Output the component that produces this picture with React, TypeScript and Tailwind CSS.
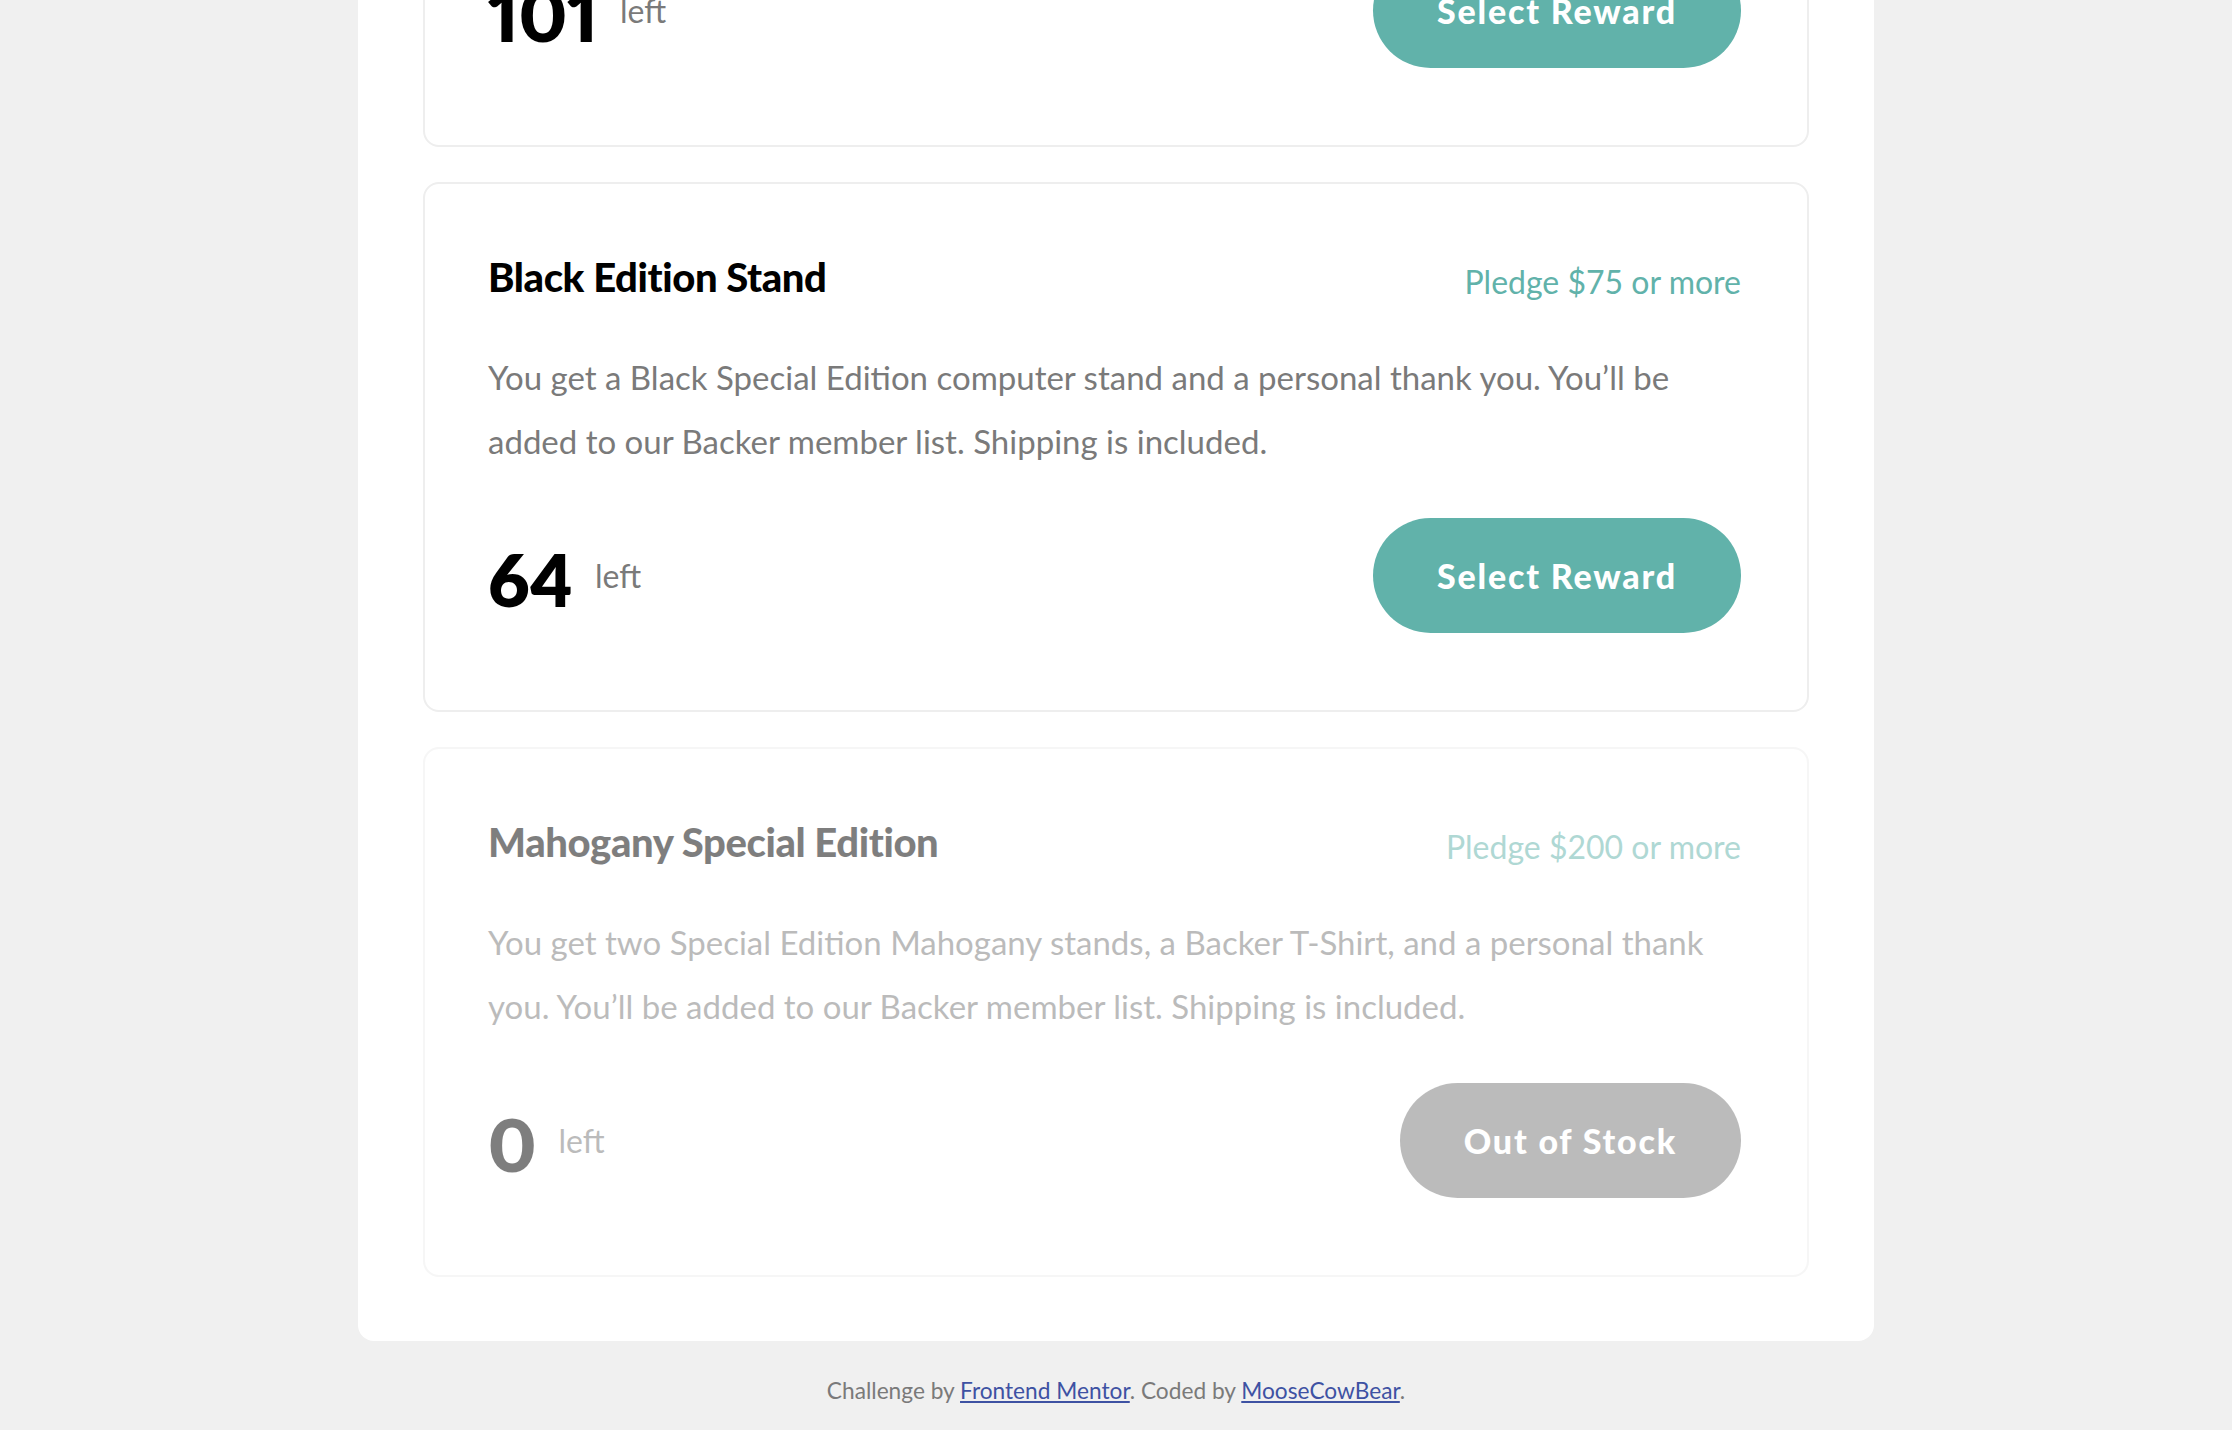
import React from "react";

type Reward = {
  title: string;
  pledge: string;
  desc: string;
  left: number;
  disabled?: boolean;
};

const rewards: Reward[] = [
  {
    title: "Bamboo Stand",
    pledge: "Pledge $25 or more",
    desc: "You get an ergonomic stand made of natural bamboo. You’ve helped us launch our promotional campaign, and you’ll be added to a special Backer member list.",
    left: 101,
  },
  {
    title: "Black Edition Stand",
    pledge: "Pledge $75 or more",
    desc: "You get a Black Special Edition computer stand and a personal thank you. You’ll be added to our Backer member list. Shipping is included.",
    left: 64,
  },
  {
    title: "Mahogany Special Edition",
    pledge: "Pledge $200 or more",
    desc: "You get two Special Edition Mahogany stands, a Backer T-Shirt, and a personal thank you. You’ll be added to our Backer member list. Shipping is included.",
    left: 0,
    disabled: true,
  },
];

function Card({ r }: { r: Reward }) {
  return (
    <div
      className={
        "h-[530px] rounded-[16px] border-2 border-[#eeeeee] bg-white pl-[63px] pr-[66px] pt-[71px] pb-[77px] " +
        (r.disabled ? "opacity-50" : "")
      }
    >
      <div className="flex h-[46px] items-start justify-between">
        <h3 className="text-[40px] leading-[44px] font-black text-black tracking-[-0.4px]">{r.title}</h3>
        <p className="pt-[5px] text-[32px] leading-[44px] text-[#61b2aa]">{r.pledge}</p>
      </div>
      <p className="mt-[44px] text-[33px] leading-[64px] text-[#7a7a7a]">{r.desc}</p>
      <div className="mt-[45px] flex h-[115px] items-center justify-between">
        <div className="flex items-center">
          <span className="text-[72px] leading-[72px] font-extrabold text-black pt-[6px] proportional-nums">
            {r.left}
          </span>
          <span className="ml-[22px] text-[32px] leading-[44px] text-[#7a7a7a]">left</span>
        </div>
        <button
          className={
            "h-[115px] rounded-full px-[64px] text-[34px] font-black tracking-[1.8px] text-white " +
            (r.disabled ? "bg-[#7a7a7a]" : "bg-[#61b2aa]")
          }
        >
          {r.disabled ? "Out of Stock" : "Select Reward"}
        </button>
      </div>
    </div>
  );
}

export default function App() {
  return (
    <div className="h-[1430px] overflow-hidden bg-[#f0f0f0] font-[Lato,sans-serif]">
      <div className="mt-[-383px]">
        <div className="mx-auto w-[1516px] rounded-b-[16px] bg-white px-[65px] pb-[64px]">
          <div className="flex flex-col gap-[35px]">
            {rewards.map((r) => (
              <Card key={r.title} r={r} />
            ))}
          </div>
        </div>
        <footer className="pt-[36px] text-center text-[22.7px] leading-[28px] text-[#7a7a7a]">
          Challenge by{" "}
          <a href="#" className="text-[#3e52a3] underline">
            Frontend Mentor
          </a>
          . Coded by{" "}
          <a href="#" className="text-[#3e52a3] underline">
            MooseCowBear
          </a>
          .
        </footer>
      </div>
    </div>
  );
}
